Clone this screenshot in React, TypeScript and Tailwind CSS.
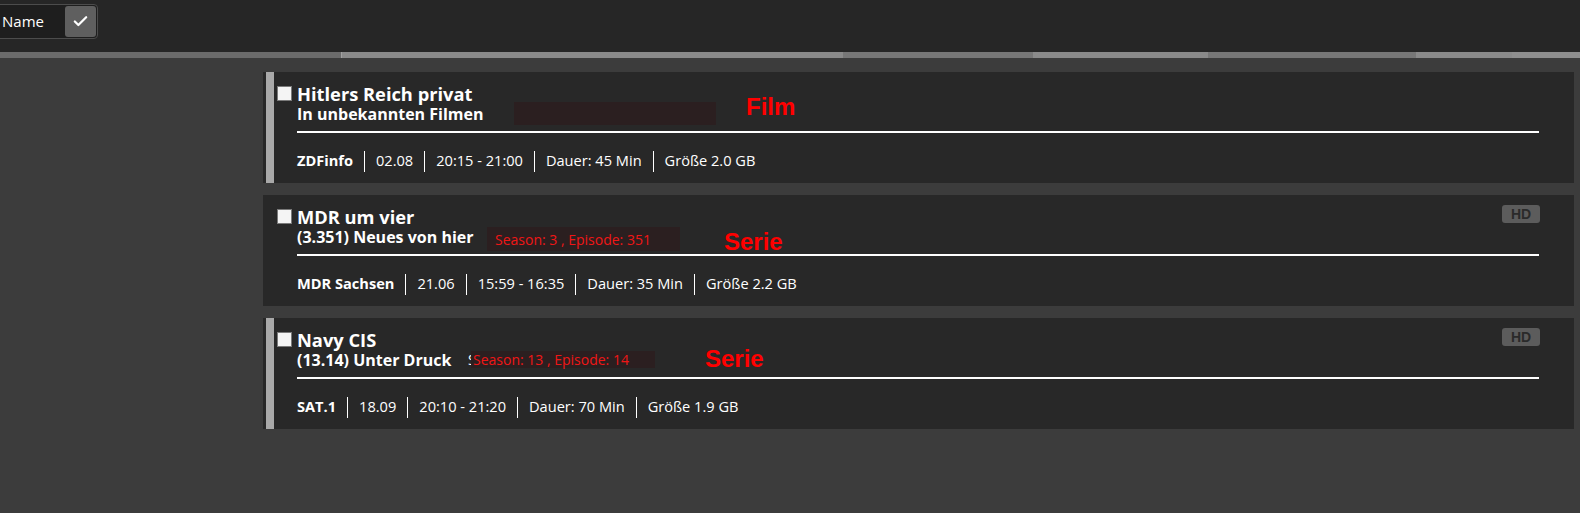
import React from "react";
import { Check } from "lucide-react";

type Item = {
  title: string;
  subtitle: string;
  channel: string;
  date: string;
  time: string;
  dauer: string;
  size: string;
  bar: boolean;
  hd: boolean;
};

const items: Item[] = [
  { title: "Hitlers Reich privat", subtitle: "In unbekannten Filmen", channel: "ZDFinfo", date: "02.08", time: "20:15 - 21:00", dauer: "Dauer: 45 Min", size: "Größe 2.0 GB", bar: true, hd: false },
  { title: "MDR um vier", subtitle: "(3.351) Neues von hier", channel: "MDR Sachsen", date: "21.06", time: "15:59 - 16:35", dauer: "Dauer: 35 Min", size: "Größe 2.2 GB", bar: false, hd: true },
  { title: "Navy CIS", subtitle: "(13.14) Unter Druck", channel: "SAT.1", date: "18.09", time: "20:10 - 21:20", dauer: "Dauer: 70 Min", size: "Größe 1.9 GB", bar: true, hd: true },
];

function Sep() {
  return <span className="mx-[11px] h-[21px] w-px bg-white" />;
}

function Overlay({ idx }: { idx: number }) {
  if (idx === 0) {
    return (
      <>
        <div className="absolute left-[251px] top-[30px] h-[23px] w-[202px] bg-[#2b1f20]" />
        <div className="absolute left-[483px] top-[21px] text-[24px] leading-[28px] font-bold text-[#ff0000] [font-family:'Liberation_Sans',Arial,sans-serif]">Film</div>
      </>
    );
  }
  if (idx === 1) {
    return (
      <>
        <div className="absolute left-[224px] top-[32px] flex h-[24px] w-[193px] items-center bg-[#2b1f20] pl-[8px] text-[14px] text-[#f01616]">Season: 3 , Episode: 351</div>
        <div className="absolute left-[461px] top-[33px] text-[24px] leading-[28px] font-bold text-[#ff0000] [font-family:'Liberation_Sans',Arial,sans-serif]">Serie</div>
      </>
    );
  }
  return (
    <>
      <div className="absolute left-[205px] top-[33px] h-[17px] w-[4px] overflow-hidden text-[14px] leading-[17px] text-white">S</div>
      <div className="absolute left-[208px] top-[33px] flex h-[17px] w-[184px] items-center bg-[#2b1f20] pl-[2px] text-[14px] text-[#f01616]">Season: 13 , Episode: 14</div>
      <div className="absolute left-[442px] top-[27px] text-[24px] leading-[28px] font-bold text-[#ff0000] [font-family:'Liberation_Sans',Arial,sans-serif]">Serie</div>
    </>
  );
}

function Card({ item, idx }: { item: Item; idx: number }) {
  return (
    <div className="relative flex h-[111px] bg-[#282828] pl-[3px]">
      <div className={item.bar ? "w-[8px] bg-[#a9a9a9]" : "w-[8px]"} />
      <div className="ml-[3px] mt-[14px] h-[15px] w-[15px] border border-[#7a7a7a] bg-[#f4f4f4]" />
      <div className="ml-[5px] flex flex-1 flex-col pr-[35px] pt-[12px] text-white">
        <div className="text-[18.3px] leading-[20px] font-bold">{item.title}</div>
        <div className="text-[16px] leading-[20px] font-bold">{item.subtitle}</div>
        <div className="mt-[7px] h-[2px] bg-white" />
        <div className="mt-[17px] flex h-[22px] items-center text-[14.6px]">
          <span className="font-bold">{item.channel}</span>
          <Sep />
          <span>{item.date}</span>
          <Sep />
          <span>{item.time}</span>
          <Sep />
          <span>{item.dauer}</span>
          <Sep />
          <span>{item.size}</span>
        </div>
      </div>
      {item.hd && (
        <div className="absolute right-[34px] top-[10px] flex h-[18px] w-[38px] items-center justify-center rounded-[3px] bg-[#5c5c5c] text-[14px] font-black leading-none text-[#2a2a2a] [font-family:'Liberation_Sans',Arial,sans-serif]">
          HD
        </div>
      )}
      <Overlay idx={idx} />
    </div>
  );
}

export default function App() {
  return (
    <div className="flex h-[513px] w-[1580px] flex-col overflow-hidden bg-[#3c3c3c] [font-family:'Open_Sans',sans-serif]">
      <div className="flex h-[52px] items-start bg-[#262626] pt-[4px]">
        <div className="-ml-[10px] flex h-[35px] items-center rounded-[4px] border border-[#4c4c4c] bg-[#1e1e1e] pl-[11px] pr-[1px]">
          <span className="text-[15px] text-white">Name</span>
          <div className="ml-[21px] flex h-[31px] w-[31px] items-center justify-center rounded-[3px] bg-[#5f5f5f]">
            <Check size={17} strokeWidth={3.2} color="#ffffff" />
          </div>
        </div>
      </div>
      <div className="flex h-[6px]">
        <div className="w-[341px] bg-[#6b6b6b]" />
        <div className="w-px bg-[#a0a0a0]" />
        <div className="w-[501px] bg-[#8a8a8a]" />
        <div className="w-[190px] bg-[#777777]" />
        <div className="w-[175px] bg-[#8a8a8a]" />
        <div className="w-[208px] bg-[#777777]" />
        <div className="w-[96px] bg-[#8a8a8a]" />
        <div className="flex-1 bg-[#8e8e8e]" />
      </div>
      <div className="flex flex-col gap-[12px] pl-[263px] pr-[6px] pt-[14px]">
        {items.map((it, i) => (
          <Card key={i} item={it} idx={i} />
        ))}
      </div>
    </div>
  );
}
